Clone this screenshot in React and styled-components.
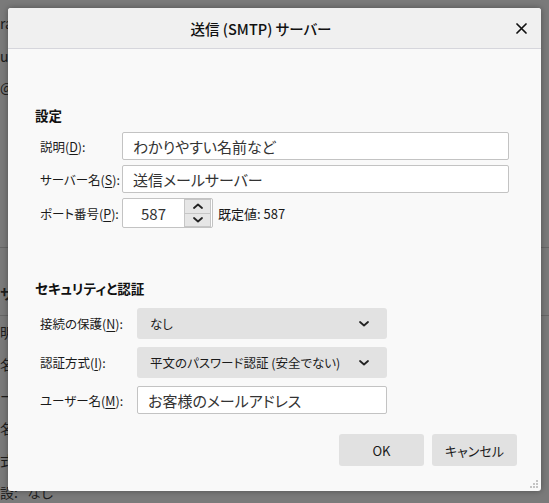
import React from 'react';
import styled, { createGlobalStyle } from 'styled-components';

const GlobalStyle = createGlobalStyle`
  html, body {
    margin: 0;
    padding: 0;
  }
  body {
    width: 549px;
    height: 503px;
    overflow: hidden;
    font-family: "Noto Sans CJK JP", "Noto Sans", sans-serif;
    font-feature-settings: "palt";
  }
  * { box-sizing: border-box; }
`;

const Screen = styled.div`
  position: relative;
  width: 549px;
  height: 503px;
  overflow: hidden;
  background: #7a7a7a;
`;

const Backdrop = styled.div`
  display: flex;
  flex-direction: column;
  padding-top: 6px;
  font-size: 14px;
  color: #1d1d1d;
`;

const BackRow = styled.div`
  height: ${p => p.$h}px;
  display: flex;
  align-items: ${p => (p.$bottom ? 'flex-end' : 'center')};
  padding-bottom: ${p => (p.$bottom ? 12 : 0)}px;
  font-weight: ${p => (p.$bold ? 700 : 400)};
  white-space: pre;
`;

const BackRule = styled.div`
  height: 1px;
  background: #666666;
`;

const Dialog = styled.div`
  position: absolute;
  top: 8px;
  left: 8px;
  width: 533px;
  height: 483px;
  display: flex;
  flex-direction: column;
  background: #f9f9f9;
  border-radius: 3px;
  box-shadow: 0 0 6px rgba(0, 0, 0, 0.35);
  color: #1a1a1a;
`;

const TitleBar = styled.div`
  height: 41px;
  flex-shrink: 0;
  display: flex;
  align-items: center;
  padding-left: 13px;
  background: #f0f0f0;
  border-bottom: 1px solid #d6d6dc;
  border-radius: 3px 3px 0 0;
`;

const Title = styled.div`
  flex: 1;
  text-align: center;
  font-size: 14.5px;
  font-weight: 500;
  color: #111;
`;

const CloseButton = styled.div`
  width: 40px;
  height: 40px;
  display: flex;
  align-items: center;
  justify-content: center;
`;

const Body = styled.div`
  display: flex;
  flex-direction: column;
  padding: 0 32px 0 27px;
`;

const Heading = styled.div`
  margin: ${p => p.$top}px 0 ${p => p.$bottom}px;
  font-size: 13.5px;
  font-weight: 700;
  line-height: 20px;
  color: #111;
`;

const FormGrid = styled.div`
  display: grid;
  grid-template-columns: ${p => p.$label}px 1fr;
  align-items: center;
  row-gap: ${p => p.$gap}px;
`;

const Label = styled.div`
  padding-left: 5px;
  font-size: 12.5px;
  color: #1a1a1a;
  white-space: nowrap;

  u {
    text-underline-offset: 2px;
  }
`;

const Field = styled.div`
  height: 28px;
  width: ${p => (p.$w ? `${p.$w}px` : 'auto')};
  display: flex;
  align-items: center;
  padding: 0 10px;
  background: #ffffff;
  border: 1px solid #c3c3c3;
  border-radius: 2px;
  font-size: 15px;
  color: #333;
  white-space: nowrap;
`;

const PortRow = styled.div`
  display: flex;
  align-items: center;
  gap: 5px;
`;

const PortBox = styled.div`
  width: 91px;
  height: 30px;
  display: flex;
  background: #ffffff;
  border: 1px solid #c3c3c3;
  border-radius: 2px;
`;

const PortValue = styled.div`
  flex: 1;
  display: flex;
  align-items: center;
  padding-left: 18px;
  font-size: 15px;
  color: #333;
`;

const Spinner = styled.div`
  width: 27px;
  display: flex;
  flex-direction: column;
  margin: 0 1px 0 0;
`;

const SpinButton = styled.div`
  flex: 1;
  display: flex;
  align-items: center;
  justify-content: center;
  background: #e6e6e6;
  border: 1px solid #c6c6c6;
  border-top-width: ${p => (p.$down ? 0 : 1)}px;
`;

const DefaultText = styled.div`
  font-size: 13px;
  color: #1a1a1a;
`;

const Select = styled.div`
  width: 250px;
  height: 31px;
  display: flex;
  align-items: center;
  justify-content: space-between;
  padding: 0 18px 0 13px;
  background: #e2e2e2;
  border-radius: 3px;
  font-size: 12.5px;
  color: #1a1a1a;
  white-space: nowrap;
`;

const Footer = styled.div`
  display: flex;
  justify-content: flex-end;
  gap: 8px;
  padding: 20px 24px 0 0;
`;

const Button = styled.div`
  width: 85px;
  height: 32px;
  display: flex;
  align-items: center;
  justify-content: center;
  background: #e1e1e1;
  border-radius: 3px;
  font-size: 13px;
  color: #1a1a1a;
`;

const Grip = styled.svg`
  position: absolute;
  right: 3px;
  bottom: 3px;
`;

const Chevron = ({ up }) => (
  <svg width="10" height="6" viewBox="0 0 10 6">
    <polyline
      points={up ? '1,5 5,1.5 9,5' : '1,1 5,4.5 9,1'}
      fill="none"
      stroke="#222"
      strokeWidth="1.8"
      strokeLinecap="round"
      strokeLinejoin="round"
    />
  </svg>
);

const backRows = [
  { h: 33, text: 'ra' },
  { h: 33, text: 'up' },
  { h: 30, text: '@r' },
  { h: 145, text: '' },
  { rule: true },
  { h: 67, text: 'サ', bold: true, bottom: true },
  { rule: true },
  { h: 32, text: '明' },
  { h: 32, text: '名' },
  { h: 32, text: 'ー' },
  { h: 32, text: '名' },
  { h: 32, text: '式' },
  { h: 32, text: '設:   なし' },
];

const App = () => (
  <Screen>
    <GlobalStyle />
    <Backdrop>
      {backRows.map((r, i) =>
        r.rule ? (
          <BackRule key={i} />
        ) : (
          <BackRow key={i} $h={r.h} $bold={r.bold} $bottom={r.bottom}>{r.text}</BackRow>
        )
      )}
    </Backdrop>

    <Dialog>
      <TitleBar>
        <Title>送信 (SMTP) サーバー</Title>
        <CloseButton>
          <svg width="11" height="11" viewBox="0 0 11 11">
            <path d="M1 1 L10 10 M10 1 L1 10" stroke="#111" strokeWidth="1.7" strokeLinecap="round" />
          </svg>
        </CloseButton>
      </TitleBar>

      <Body>
        <Heading $top={56} $bottom={7}>設定</Heading>
        <FormGrid $label={87} $gap={5}>
          <Label>説明(<u>D</u>):</Label>
          <Field>わかりやすい名前など</Field>
          <Label>サーバー名(<u>S</u>):</Label>
          <Field>送信メールサーバー</Field>
          <Label>ポート番号(<u>P</u>):</Label>
          <PortRow>
            <PortBox>
              <PortValue>587</PortValue>
              <Spinner>
                <SpinButton><Chevron up /></SpinButton>
                <SpinButton $down><Chevron /></SpinButton>
              </Spinner>
            </PortBox>
            <DefaultText>既定値: 587</DefaultText>
          </PortRow>
        </FormGrid>

        <Heading $top={50} $bottom={10}>セキュリティと認証</Heading>
        <FormGrid $label={102} $gap={8}>
          <Label>接続の保護(<u>N</u>):</Label>
          <Select>
            <span>なし</span>
            <Chevron />
          </Select>
          <Label>認証方式(<u>I</u>):</Label>
          <Select>
            <span>平文のパスワード認証 (安全でない)</span>
            <Chevron />
          </Select>
          <Label>ユーザー名(<u>M</u>):</Label>
          <Field $w={250}>お客様のメールアドレス</Field>
        </FormGrid>
      </Body>

      <Footer>
        <Button>OK</Button>
        <Button>キャンセル</Button>
      </Footer>

      <Grip width="8" height="8" viewBox="0 0 8 8">
        <rect x="6" y="0" width="2" height="2" fill="#c4c4c4" />
        <rect x="3" y="3" width="2" height="2" fill="#c4c4c4" />
        <rect x="6" y="3" width="2" height="2" fill="#c4c4c4" />
        <rect x="0" y="6" width="2" height="2" fill="#c4c4c4" />
        <rect x="3" y="6" width="2" height="2" fill="#c4c4c4" />
        <rect x="6" y="6" width="2" height="2" fill="#c4c4c4" />
      </Grip>
    </Dialog>
  </Screen>
);

export default App;
